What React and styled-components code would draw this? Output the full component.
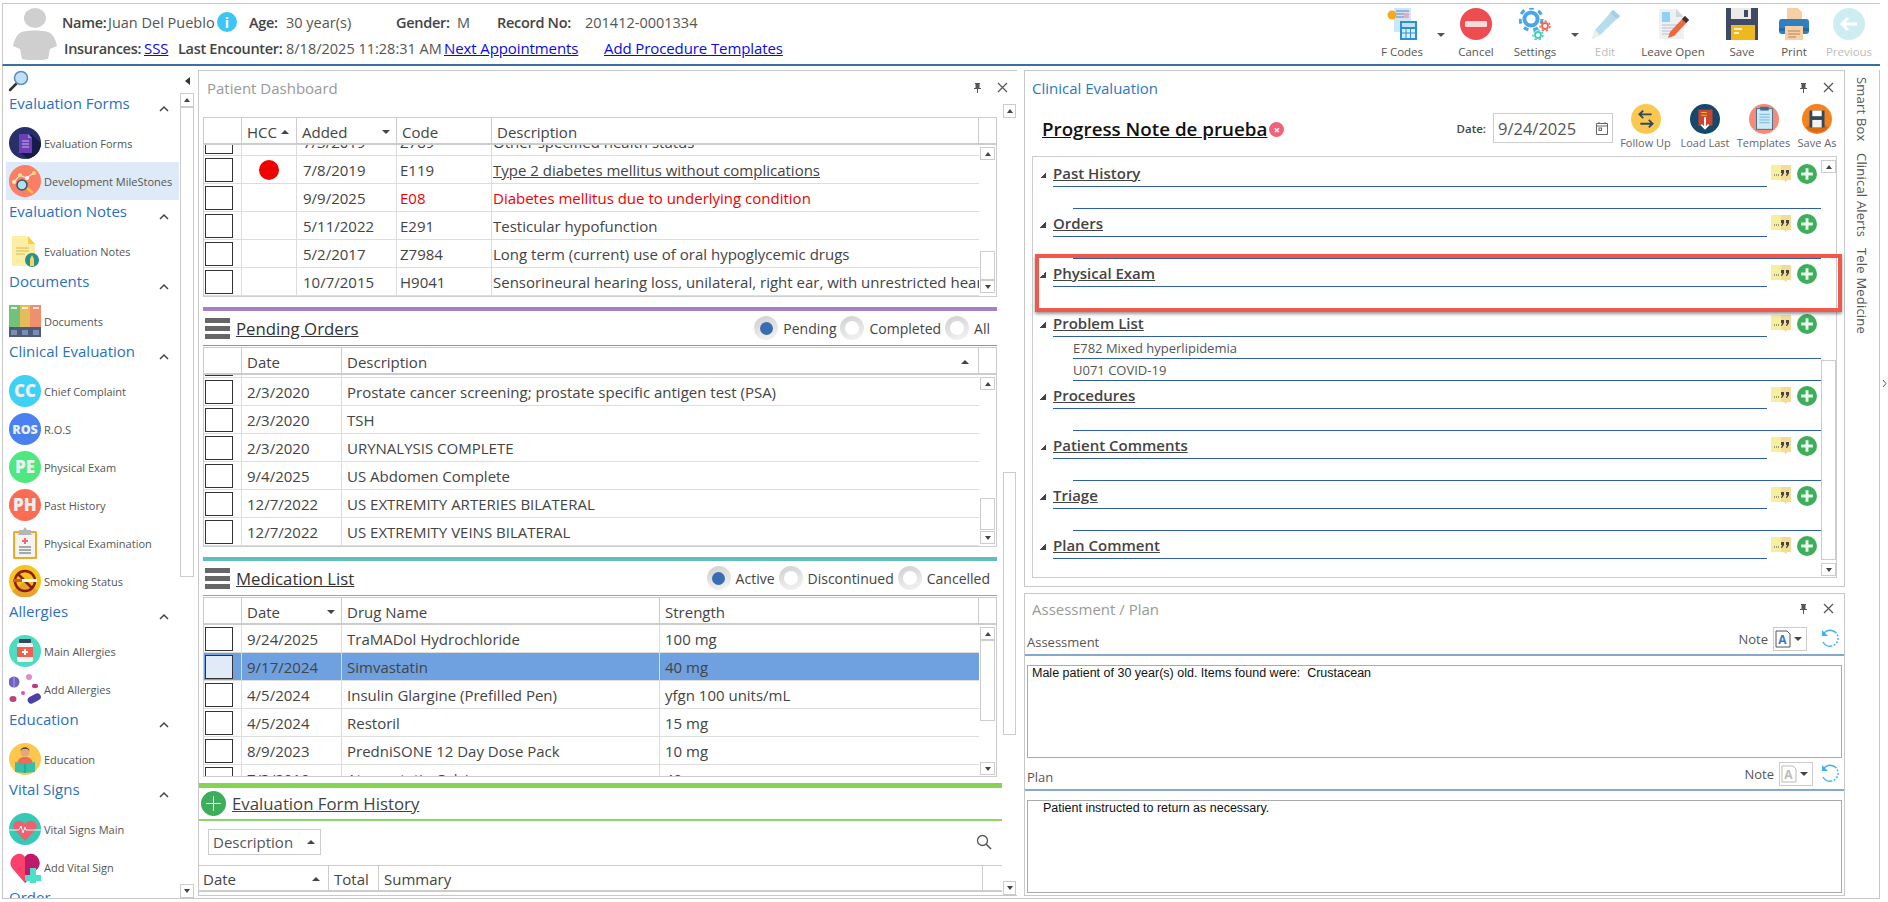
import React from "react";
import styled, { createGlobalStyle } from "styled-components";

const GlobalStyle = createGlobalStyle`
  html, body { margin: 0; padding: 0; background: #fff; }
  * { box-sizing: border-box; }
  body { font-family: "Open Sans", "Liberation Sans", sans-serif; color: #444; overflow: hidden; }
`;

const Frame = styled.div`
  width: 1888px;
  height: 902px;
  padding-top: 3px;
  display: flex;
  flex-direction: column;
  overflow: hidden;
  background: #fff;
`;

/* ---------- top header ---------- */
const Header = styled.header`
  width: 1878px;
  height: 63px;
  margin-left: 2px;
  border-top: 1px solid #c8c8c8;
  border-left: 1px solid #c8c8c8;
  border-bottom: 2px solid #3b6ea5;
  display: flex;
  justify-content: space-between;
`;

const PatientBox = styled.div`
  display: flex;
  padding-left: 9px;
`;

const Avatar = styled.svg`
  width: 46px;
  height: 52px;
  margin-top: 4px;
  margin-right: 4px;
`;

const InfoRows = styled.div`
  display: flex;
  flex-direction: column;
  padding-top: 5px;
`;

const InfoRow = styled.div`
  display: flex;
  align-items: center;
  height: 26px;
  padding-left: ${(p) => p.$indent || 0}px;
`;

const Slot = styled.div`
  width: ${(p) => p.$w}px;
  flex: none;
  white-space: nowrap;
  font-size: 14.500px;
  font-weight: ${(p) => (p.$bold ? 600 : 400)};
  letter-spacing: ${(p) => (p.$bold ? "-0.3px" : "0")};
  color: ${(p) => (p.$bold ? "#444" : "#555")};
`;

const HeadLink = styled.a`
  font-size: 15px;
  letter-spacing: -0.1px;
  color: #0a0ae6;
  text-decoration: underline;
`;

const InfoDot = styled.div`
  width: 20px;
  height: 20px;
  border-radius: 50%;
  background: #3cc5f5;
  color: #fff;
  font-size: 14px;
  font-weight: 700;
  display: flex;
  align-items: center;
  justify-content: center;
`;

const Toolbar = styled.div`
  display: flex;
  margin-right: 4px;
`;

const ToolItem = styled.div`
  width: ${(p) => p.$w}px;
  display: flex;
  flex-direction: column;
  align-items: center;
  padding-top: 4px;
  font-size: 11.500px;
  line-height: 15px;
  white-space: nowrap;
  color: ${(p) => (p.$off ? "#bbb" : "#555")};
  svg { display: block; margin-bottom: 4px; }
`;

const ToolCaret = styled.div`
  width: ${(p) => p.$w}px;
  display: flex;
  justify-content: center;
  padding-top: 29px;
  &::after {
    content: "";
    border-left: 4px solid transparent;
    border-right: 4px solid transparent;
    border-top: 4px solid #555;
    height: 0;
  }
`;

/* ---------- body ---------- */
const Body = styled.div`
  width: 1878px;
  height: 833px;
  margin-left: 2px;
  display: flex;
  border-bottom: 1px solid #c8c8c8;
  position: relative;
`;

const Sidebar = styled.aside`
  width: 196px;
  flex: none;
  border-left: 1px solid #c8c8c8;
  display: flex;
`;

const SideColumn = styled.div`
  width: 176px;
  display: flex;
  flex-direction: column;
  overflow: hidden;
`;

const SideSearch = styled.div`
  height: 26px;
  flex: none;
  padding: 4px 0 0 5px;
`;

const SideList = styled.div`
  flex: 1;
  overflow: hidden;
  padding-left: 3px;
`;

const GroupHead = styled.div`
  height: 32px;
  display: flex;
  justify-content: space-between;
  padding-left: 3px;
  padding-right: 10px;
`;

const GroupTitle = styled.div`
  font-size: 15px;
  line-height: 22px;
  color: #2a70c0;
  white-space: nowrap;
`;

const Chevron = styled.svg`
  width: 10px;
  height: 7px;
  margin-top: 13px;
`;

const SideItem = styled.div`
  height: 38px;
  display: flex;
  align-items: center;
  gap: 3px;
  padding-left: 3px;
  font-size: 11px;
  color: #555;
  white-space: nowrap;
  background: ${(p) => (p.$active ? "#deeaf7" : "transparent")};
`;

const SideRail = styled.div`
  width: 19px;
  padding-left: 1px;
  display: flex;
  flex-direction: column;
`;

const CollapseArrow = styled.div`
  height: 27px;
  flex: none;
  padding: 11px 0 0 5px;
  &::after {
    content: "";
    display: block;
    width: 0;
    border-top: 4px solid transparent;
    border-bottom: 4px solid transparent;
    border-right: 5px solid #333;
  }
`;

/* scrollbars */
const RailBox = styled.div`
  width: ${(p) => p.$w}px;
  flex: ${(p) => (p.$grow ? 1 : "none")};
  min-height: 0;
  display: flex;
  flex-direction: column;
  padding: ${(p) => p.$pad || "0"};
`;

const RailBtn = styled.div`
  height: ${(p) => p.$h || 13}px;
  flex: none;
  border: 1px solid #ccc;
  background: #fff;
  display: flex;
  align-items: center;
  justify-content: center;
  &::after {
    content: "";
    border-left: 3px solid transparent;
    border-right: 3px solid transparent;
    ${(p) => (p.$down ? "border-top: 4px solid #444;" : "border-bottom: 4px solid #444;")}
  }
`;

const Track = styled.div`
  flex: 1;
  overflow: hidden;
`;

const Thumb = styled.div`
  margin-top: ${(p) => p.$top}px;
  height: ${(p) => p.$h}px;
  border: 1px solid #ccc;
  background: #fff;
`;

const ScrollRail = ({ w, pad, top, h, btn, grow }) => (
  <RailBox $w={w} $pad={pad} $grow={grow}>
    <RailBtn $h={btn} />
    <Track>
      <Thumb $top={top} $h={h} />
    </Track>
    <RailBtn $h={btn} $down />
  </RailBox>
);

/* ---------- dashboard panel ---------- */
const DashPanel = styled.section`
  width: 819px;
  height: 826px;
  margin-top: 4px;
  flex: none;
  border-left: 1px solid #c8c8c8;
  border-top: 1px solid #c8c8c8;
  border-bottom: 1px solid #c8c8c8;
  display: flex;
  flex-direction: column;
`;

const PanelTitleRow = styled.div`
  height: ${(p) => p.$h || 33}px;
  flex: none;
  display: flex;
  align-items: center;
  justify-content: space-between;
  padding: 0 ${(p) => p.$right || 9}px ${(p) => p.$bottom || 0}px ${(p) => p.$left || 8}px;
`;

const PanelTitle = styled.div`
  font-size: 15px;
  color: ${(p) => (p.$active ? "#2a78c2" : "#999")};
`;

const PanelControls = styled.div`
  display: flex;
  align-items: center;
  gap: 15px;
`;

const DashRow = styled.div`
  flex: 1;
  display: flex;
  min-height: 0;
`;

const DashColumn = styled.div`
  width: 803px;
  flex: none;
  display: flex;
  flex-direction: column;
  padding-top: 13px;
`;

const DashRailWrap = styled.div`
  display: flex;
  margin-left: 1px;
`;

const GridSection = styled.div`
  padding: 0 5px 0 4px;
`;

const SectionHead = styled.div`
  margin-top: 10px;
  height: 39px;
  border-top: 4px solid ${(p) => p.$color};
  border-bottom: 1px solid ${(p) => p.$color};
  margin-bottom: 1px;
  display: flex;
  align-items: center;
  justify-content: space-between;
  padding-left: 2px;
`;

const HeadLeft = styled.div`
  display: flex;
  align-items: center;
  gap: 6px;
`;

const Hamburger = styled.div`
  width: 25px;
  height: 21px;
  background: repeating-linear-gradient(#666 0 5px, #fff 5px 8px);
`;

const SectionTitle = styled.div`
  font-size: 16.800px;
  color: #333;
  text-decoration: underline;
`;

const RadioRow = styled.div`
  display: flex;
  align-items: center;
  padding-right: 3px;
`;

const RadioOuter = styled.div`
  width: 24px;
  height: 24px;
  flex: none;
  border-radius: 50%;
  background: linear-gradient(160deg, #cfcfcf, #f5f5f5);
  display: flex;
  align-items: center;
  justify-content: center;
  margin-right: 5px;
  &::after {
    content: "";
    width: ${(p) => (p.$on ? 13 : 14)}px;
    height: ${(p) => (p.$on ? 13 : 14)}px;
    border-radius: 50%;
    background: ${(p) => (p.$on ? "#3a6cb0" : "#fff")};
  }
`;

const RadioLabel = styled.div`
  font-size: 14px;
  color: #444;
  margin-right: ${(p) => p.$mr || 4}px;
`;

const GridFrame = styled.div`
  height: ${(p) => p.$h}px;
  border: 1px solid #ccc;
  display: flex;
  flex-direction: column;
  overflow: hidden;
`;

const GridHead = styled.div`
  height: 27px;
  flex: none;
  display: grid;
  grid-template-columns: ${(p) => p.$cols};
  border-bottom: 2px solid #ccc;
`;

const HeadCell = styled.div`
  display: flex;
  align-items: center;
  justify-content: space-between;
  padding: 2px ${(p) => p.$right || 7}px 0 ${(p) => p.$pad ?? 5}px;
  font-size: 15px;
  color: #444;
  white-space: nowrap;
  border-right: 1px solid #ccc;
  &:last-child { border-right: none; }
`;

const SortMark = styled.span`
  width: 0;
  height: 0;
  border-left: 4px solid transparent;
  border-right: 4px solid transparent;
  ${(p) => (p.$down ? "border-top: 4px solid #444;" : "border-bottom: 4px solid #444;")}
`;

const GridBody = styled.div`
  flex: 1;
  display: flex;
  min-height: 0;
`;

const RowsClip = styled.div`
  flex: 1;
  min-width: 0;
  overflow: hidden;
`;

const RowsInner = styled.div`
  margin-top: -${(p) => p.$scroll || 0}px;
`;

const GridRow = styled.div`
  height: 28px;
  display: grid;
  grid-template-columns: ${(p) => p.$cols};
  border-bottom: 1px solid #ddd;
  background: ${(p) => (p.$selected ? "#6fa0e0" : "transparent")};
`;

const GridCell = styled.div`
  display: flex;
  align-items: center;
  padding-left: ${(p) => p.$pad ?? 5}px;
  font-size: 15px;
  white-space: nowrap;
  overflow: hidden;
  color: ${(p) => (p.$red ? "#f00000" : "#444")};
  text-decoration: ${(p) => (p.$link ? "underline" : "none")};
  border-right: 1px solid #ddd;
  &:last-child { border-right: none; }
`;

const CheckBox = styled.div`
  width: 28px;
  height: 24px;
  margin-left: 1px;
  flex: none;
  border: 1px solid #333;
  background: ${(p) => (p.$selected ? "#e0ebf7" : "#fff")};
`;

const RedDot = styled.div`
  width: 20px;
  height: 20px;
  margin-left: 17px;
  border-radius: 50%;
  background: #f00000;
`;

/* evaluation form history */
const GreenBar = styled.div`
  height: 5px;
  margin-top: 6px;
  flex: none;
  background: #85d44f;
`;

const HistoryHead = styled.div`
  height: 33px;
  flex: none;
  border-bottom: 2px solid #8fd468;
  display: flex;
  align-items: center;
  gap: 6px;
  padding-left: 2px;
`;

const HistoryTitle = styled(SectionTitle)`
  color: #444;
`;

const FilterRow = styled.div`
  height: 45px;
  flex: none;
  display: flex;
  align-items: center;
  justify-content: space-between;
  padding: 0 10px 2px 9px;
  border-bottom: 1px solid #ccc;
`;

const FilterSelect = styled.div`
  width: 113px;
  height: 26px;
  border: 1px solid #ccc;
  display: flex;
  align-items: center;
  justify-content: space-between;
  padding: 0 5px 0 4px;
  font-size: 15px;
  color: #555;
`;

const HistoryHeadRow = styled(GridHead)`
  height: 26px;
`;

/* ---------- right column ---------- */
const RightColumn = styled.div`
  width: 821px;
  flex: none;
  margin: 4px 0 0 7px;
  display: flex;
  flex-direction: column;
  gap: 6px;
`;

const ClinicalPanel = styled.section`
  height: 517px;
  flex: none;
  border: 1px solid #c8c8c8;
  display: flex;
  flex-direction: column;
`;

const NoteBar = styled.div`
  height: 52px;
  flex: none;
  display: flex;
  justify-content: space-between;
  padding: 0 1px 0 17px;
`;

const NoteTitleWrap = styled.div`
  display: flex;
  align-items: center;
  gap: 2px;
  height: 50px;
`;

const NoteTitle = styled.div`
  font-size: 18.800px;
  font-weight: 600;
  color: #111;
  text-decoration: underline;
`;

const NoteClose = styled.div`
  width: 15px;
  height: 15px;
  border-radius: 50%;
  background: #f0637a;
  color: #fff;
  font-size: 11px;
  font-weight: 700;
  line-height: 15px;
  text-align: center;
`;

const NoteTools = styled.div`
  display: flex;
  align-items: flex-start;
`;

const DateLabel = styled.div`
  font-size: 11.500px;
  font-weight: 600;
  color: #444;
  margin: 17px 7px 0 0;
`;

const DateField = styled.div`
  width: 120px;
  height: 30px;
  margin-top: 9px;
  margin-right: 4px;
  border: 1px solid #ccc;
  display: flex;
  align-items: center;
  justify-content: space-between;
  padding: 0 4px;
  font-size: 16.500px;
  color: #555;
`;

const NoteAction = styled.div`
  width: ${(p) => p.$w}px;
  display: flex;
  flex-direction: column;
  align-items: center;
  font-size: 11px;
  color: #666;
  white-space: nowrap;
  svg { display: block; margin-bottom: 1px; }
`;

const SectionBox = styled.div`
  flex: 1;
  margin: 0 7px 8px;
  border: 1px solid #ccc;
  display: flex;
  position: relative;
  min-height: 0;
`;

const SectionList = styled.div`
  flex: 1;
  min-width: 0;
  padding-top: 2px;
`;

const BodyLine = styled.div`
  height: ${(p) => p.$h}px;
  margin-left: 40px;
  border-bottom: 1px solid #2f5fa8;
  font-size: 13px;
  line-height: 22px;
  color: #555;
`;

const EvalHead = styled.div`
  height: 28px;
  display: flex;
`;

const Triangle = styled.div`
  width: 6px;
  height: 6px;
  margin: 13px 7px 0 7px;
  flex: none;
  background: linear-gradient(135deg, transparent 50%, #444 50%);
`;

const EvalTitleBox = styled.div`
  width: 714px;
  flex: none;
  border-bottom: 1px solid #2f5fa8;
  font-size: 15px;
  font-weight: 600;
  line-height: 26px;
  padding-top: 1px;
  color: #444;
  span { text-decoration: underline; }
`;

const EvalIcons = styled.div`
  display: flex;
  align-items: center;
  gap: 6px;
  padding-left: 4px;
  height: 26px;
  padding-top: 4px;
`;

const HighlightBox = styled.div`
  position: absolute;
  left: 2px;
  top: 97px;
  width: 807px;
  height: 58px;
  border: 4px solid #f0584c;
  box-shadow: 0 2px 3px rgba(0, 0, 0, 0.4);
  pointer-events: none;
`;

const AssessmentPanel = styled.section`
  height: 303px;
  flex: none;
  border: 1px solid #c8c8c8;
  display: flex;
  flex-direction: column;
`;

const NoteRow = styled.div`
  height: ${(p) => p.$h}px;
  flex: none;
  border-bottom: 2px solid #87a7cb;
  display: flex;
  align-items: flex-end;
  justify-content: space-between;
  padding: 0 4px 3px 2px;
`;

const NoteLabel = styled.div`
  font-size: 13px;
  color: #555;
`;

const NoteRight = styled.div`
  display: flex;
  align-items: center;
  font-size: 13px;
  color: #555;
`;

const NotePick = styled.div`
  width: 34px;
  height: 24px;
  margin-left: 5px;
  margin-right: ${(p) => p.$gap}px;
  border: 1px solid #ccc;
  display: flex;
  align-items: center;
  gap: 3px;
  padding-left: 1px;
  &::after {
    content: "";
    border-left: 4px solid transparent;
    border-right: 4px solid transparent;
    border-top: 4px solid #444;
  }
`;

const TextBox = styled.div`
  height: 93px;
  flex: none;
  margin: 9px 2px 0;
  border: 1px solid #aaa;
  padding: 0 ${(p) => p.$pad}px;
  font-family: "Liberation Sans", Arial, sans-serif;
  font-size: 12.500px;
  line-height: 14px;
  color: #111;
  white-space: pre;
`;

const SideTabs = styled.div`
  flex: 1;
  margin-top: 4px;
  border-right: 1px solid #c8c8c8;
  display: flex;
  flex-direction: column;
  align-items: center;
  gap: 11px;
  padding-top: 7px;
  position: relative;
`;

const SideTab = styled.div`
  writing-mode: vertical-rl;
  font-size: 13px;
  letter-spacing: 0.2px;
  color: #555;
  white-space: nowrap;
`;

const TinyMark = styled.svg`
  position: absolute;
  right: -8px;
  top: 309px;
  width: 5px;
  height: 9px;
`;

/* ---------- drawings ---------- */
const Ico = ({ size = 32, children }) => (
  <svg width={size} height={size} viewBox="0 0 32 32" style={{ flex: "none" }}>
    {children}
  </svg>
);

const PinIcon = () => (
  <svg width="9" height="12" viewBox="0 0 9 12">
    <path d="M2 1h5v1H6.500v4H8v1H5v4H4V7H1V6h1.500V2H2z" fill="#555" />
  </svg>
);

const CloseIcon = () => (
  <svg width="11" height="11" viewBox="0 0 11 11">
    <path d="M1 1l9 9M10 1l-9 9" stroke="#555" strokeWidth="1.200" />
  </svg>
);

const Magnifier = () => (
  <svg width="22" height="22" viewBox="0 0 22 22">
    <path d="M2 20l6-6" stroke="#333" strokeWidth="2.500" strokeLinecap="round" />
    <circle cx="13" cy="8" r="6.500" fill="#bfe0f5" stroke="#5a8fc0" strokeWidth="1.500" />
  </svg>
);

const GroupChevron = () => (
  <Chevron viewBox="0 0 10 7">
    <path d="M1 6l4-4 4 4" fill="none" stroke="#444" strokeWidth="1.500" />
  </Chevron>
);

const LetterIcon = ({ color, text, fs = 15 }) => (
  <Ico>
    <circle cx="16" cy="16" r="16" fill={color} />
    <text x="16" y={16 + fs * 0.36} textAnchor="middle" fontFamily="Open Sans" fontWeight="800" fontSize={fs} fill="#e8f0f0">
      {text}
    </text>
  </Ico>
);

const EvalFormsIcon = () => (
  <Ico>
    <circle cx="16" cy="16" r="16" fill="#27306b" />
    <path d="M10 25l12-18 10 9a16 16 0 0 1-13 15.700z" fill="#151c47" />
    <path d="M10 7h9l4 4v15H10z" fill="#6a3fb5" />
    <path d="M19 7l4 4h-4z" fill="#9d80d6" />
    <path d="M13 14h7M13 17h7M13 20h7" stroke="#c9b8ec" strokeWidth="1.200" />
  </Ico>
);

const MilestoneIcon = () => (
  <Ico>
    <circle cx="16" cy="16" r="16" fill="#fb7f65" />
    <path d="M5 17l6-7 6 3 8-5" fill="none" stroke="#fde2d8" strokeWidth="1.200" />
    <circle cx="5" cy="17" r="2" fill="#fff3b0" />
    <circle cx="11" cy="10" r="2" fill="#fbe07a" />
    <circle cx="18" cy="13" r="2" fill="#fff" />
    <circle cx="25" cy="8" r="2" fill="#fbe07a" />
    <path d="M18 23l6 5" stroke="#f5c33b" strokeWidth="2.500" />
    <circle cx="13" cy="20" r="5" fill="#aee0f0" stroke="#33536f" strokeWidth="1.500" />
  </Ico>
);

const NotesIcon = () => (
  <Ico>
    <path d="M3 1h16l7 8v22H3z" fill="#fdeea5" />
    <path d="M19 1l7 8h-7z" fill="#f9cf45" />
    <path d="M7 13h13M7 16h13M7 19h9" stroke="#d9b94a" strokeWidth="1.200" />
    <circle cx="23" cy="25" r="7" fill="#2a8f8a" />
    <path d="M21 24l2-4 2 4v7h-4z" fill="#f6d55c" />
  </Ico>
);

const DocumentsIcon = () => (
  <Ico>
    <rect x="0" y="0" width="11" height="32" fill="#71c37c" />
    <rect x="11" y="0" width="11" height="32" fill="#e6bb5b" />
    <rect x="21" y="0" width="11" height="32" fill="#ef8f6e" />
    <rect x="0" y="22" width="32" height="10" fill="#4f5b7a" />
    <path d="M2 3h6M13 3h6M24 3h6" stroke="#fff" strokeWidth="1.500" />
    <path d="M2 25h6v5H2zM13 25h6v5h-6zM24 25h6v5h-6z" fill="#7d8db0" />
  </Ico>
);

const ClipboardIcon = () => (
  <Ico>
    <rect x="4" y="4" width="24" height="28" rx="1.500" fill="#f5a623" />
    <rect x="6" y="6" width="20" height="24" fill="#f3f3ef" />
    <path d="M10 6V3h4l2-3 2 3h4v3l1 2H9z" fill="#b5b5b5" />
    <path d="M16 11v6M13 14h6" stroke="#ef6a7a" strokeWidth="2" />
    <path d="M10 20h12M10 23h12M10 26h12" stroke="#55606a" strokeWidth="1.200" />
  </Ico>
);

const SmokingIcon = () => (
  <Ico>
    <circle cx="16" cy="16" r="16" fill="#f9c31f" />
    <path d="M16 16l13 10a16 16 0 0 1-26 0z" fill="#e8a22e" />
    <circle cx="16" cy="16" r="10" fill="none" stroke="#8c1d12" strokeWidth="2.500" />
    <path d="M9 9l14 14" stroke="#8c1d12" strokeWidth="2.500" />
    <rect x="4" y="14" width="9" height="3" fill="#e5522d" />
    <rect x="13" y="14" width="15" height="3" fill="#fff" />
  </Ico>
);

const BottleIcon = () => (
  <Ico>
    <circle cx="16" cy="16" r="16" fill="#4edcc0" />
    <rect x="10" y="4" width="12" height="4" rx="1" fill="#33485c" />
    <rect x="8" y="8" width="16" height="19" rx="2" fill="#f4f4f4" />
    <rect x="8" y="12" width="16" height="10" fill="#f0624f" />
    <path d="M16 14v6M13 17h6" stroke="#fff" strokeWidth="2" />
  </Ico>
);

const PillsIcon = () => (
  <Ico>
    <circle cx="5" cy="9" r="5.500" fill="#6c63c7" />
    <path d="M5 3.500v11" stroke="#a9a3ea" />
    <circle cx="20" cy="4" r="3" fill="#e58bc0" />
    <ellipse cx="26" cy="13" rx="3" ry="2.200" fill="#b93a82" />
    <circle cx="14" cy="20" r="2" fill="#e84ea5" />
    <ellipse cx="4" cy="26" rx="3.500" ry="3" fill="#b4457e" />
    <rect x="18" y="22" width="14" height="7" rx="3.500" fill="#4c3fa8" transform="rotate(-28 25 25)" />
  </Ico>
);

const EducationIcon = () => (
  <Ico>
    <circle cx="16" cy="16" r="16" fill="#fbc84d" />
    <circle cx="16" cy="9" r="4.500" fill="#e9a57c" />
    <path d="M11.500 8c0-5 9-5 9 0l-2-2h-5z" fill="#5b4a42" />
    <path d="M8 22c0-6 4-8 8-8s8 2 8 8z" fill="#ef6a5b" />
    <path d="M6 19l10 2 10-2v10l-10 1-10-1z" fill="#34bfa8" />
    <path d="M16 21v9" stroke="#1f9684" />
  </Ico>
);

const VitalIcon = () => (
  <Ico>
    <circle cx="16" cy="16" r="16" fill="#36c9b5" />
    <path d="M16 28L5 16c-4-6 6-12 11-5 5-7 15-1 11 5z" fill="#f0606e" />
    <path d="M0 17h10l2-4 2 7 2-6 1 3h15" fill="none" stroke="#e6fbf8" strokeWidth="1" />
  </Ico>
);

const AddVitalIcon = () => (
  <Ico>
    <path d="M16 32L3 17C-3 8 10-3 16 6c6-9 19 2 13 11z" fill="#f9416b" />
    <path d="M16 32V6c6-9 19 2 13 11z" fill="#c0186a" />
    <path d="M16 24h5v-7h6v7h5v6h-5v2h-6v-2h-5z" fill="#4be0c8" />
  </Ico>
);

const PlusCircle = ({ size = 25, line }) => (
  <svg width={size} height={size} viewBox="0 0 24 24" style={{ flex: "none" }}>
    <circle cx="12" cy="12" r="12" fill="#3fae5b" />
    <path d="M12 5v14M5 12h14" stroke={line ? "#fff" : "#e8f8ec"} strokeWidth={line ? 1 : 3.500} />
  </svg>
);

const QuoteIcon = () => (
  <svg width="20" height="20" viewBox="0 0 20 20" style={{ flex: "none" }}>
    <path d="M0 1h20v15h-4l-1 2-2-2H0z" fill="#f6efa0" />
    <path d="M10 1h10v15h-4l-1 2-2-2h-3z" fill="#f5dc96" />
    <path d="M10 6h3v3l-2 3h-1l1-3h-1zM15 6h3v3l-2 3h-1l1-3h-1z" fill="#444" />
    <path d="M3 11h1M5 11h1M7 11h1" stroke="#444" />
  </svg>
);

const FCodesIcon = () => (
  <Ico>
    <rect x="8" y="0" width="17" height="24" fill="#cfe6f7" />
    <path d="M10 3h13M10 6h8M10 9h8" stroke="#5f7fbf" />
    <rect x="18" y="5" width="5" height="5" fill="#f4a6c0" />
    <circle cx="6" cy="7" r="4.500" fill="#f6a821" />
    <rect x="14" y="13" width="17" height="19" fill="#2e8fd0" />
    <rect x="16" y="15" width="13" height="4" fill="#bfe3f6" />
    <path d="M16 21h13v9H16z" fill="#d6eefa" />
    <path d="M20 21v9M24.500 21v9M16 25h13" stroke="#2e8fd0" />
  </Ico>
);

const CancelIcon = () => (
  <Ico>
    <circle cx="16" cy="16" r="16" fill="#ee4c50" />
    <rect x="5" y="13" width="22" height="6" rx="1" fill="#f6d9d9" />
  </Ico>
);

const GearPath = ({ cx, cy, r, color, hole }) => (
  <g>
    <circle cx={cx} cy={cy} r={r} fill="none" stroke={color} strokeWidth={r * 0.28} strokeDasharray={`${r * 0.45} ${r * 0.45}`} />
    <circle cx={cx} cy={cy} r={r * 0.78} fill={color} />
    <circle cx={cx} cy={cy} r={r * 0.42} fill={hole} />
  </g>
);

const SettingsIcon = () => (
  <Ico>
    <GearPath cx={12} cy={11} r={11} color="#49a6ec" hole="#fff" />
    <GearPath cx={26} cy={18} r={5} color="#f0654f" hole="#fff" />
    <GearPath cx={19} cy={27} r={5} color="#3ed0b4" hole="#fff" />
  </Ico>
);

const EditIcon = () => (
  <Ico>
    <path d="M24 2l7 6L11 27 3 31l3-9z" fill="#b6dcee" />
    <path d="M6 22l5 5-8 4z" fill="#eee" />
    <path d="M24 2l7 6-3 3-7-6z" fill="#a4cfe4" />
  </Ico>
);

const LeaveOpenIcon = () => (
  <Ico>
    <path d="M2 1h17l8 8v22H2z" fill="#eef1f4" />
    <path d="M19 1l8 8h-8z" fill="#d3d8dd" />
    <rect x="5" y="4" width="8" height="10" fill="#8fd2f5" />
    <path d="M5 17h15M5 20h12M5 23h10M5 26h8" stroke="#b8c0c8" />
    <path d="M28 8l4 4-15 16-6 2 2-6z" fill="#f0673c" />
    <path d="M28 8l4 4-3 3-4-4z" fill="#333" />
  </Ico>
);

const SaveIcon = () => (
  <Ico>
    <path d="M0 0h32v32H0z" fill="#3f4a66" />
    <path d="M5 0h20v11H5z" fill="#ecebe6" />
    <rect x="18" y="2" width="4" height="7" fill="#3f4a66" />
    <rect x="5" y="17" width="24" height="15" fill="#eeb91f" />
    <path d="M8 21h8M8 25h5" stroke="#fff" strokeWidth="1.500" />
  </Ico>
);

const PrintIcon = () => (
  <Ico>
    <path d="M9 0h11l4 4v8H9z" fill="#f6cfa5" />
    <rect x="1" y="11" width="30" height="15" rx="3" fill="#2f7fc1" />
    <rect x="1" y="20" width="30" height="3" fill="#2768a0" />
    <rect x="7" y="18" width="18" height="14" fill="#f6cfa5" />
    <path d="M10 23h12M10 26h12M10 29h8" stroke="#b5835a" />
  </Ico>
);

const PreviousIcon = () => (
  <Ico>
    <circle cx="16" cy="16" r="16" fill="#cdedf2" />
    <path d="M24 16H10M15 10l-6 6 6 6" fill="none" stroke="#fff" strokeWidth="3" />
  </Ico>
);

const FollowUpIcon = () => (
  <Ico size={30}>
    <circle cx="16" cy="16" r="16" fill="#fbc74f" />
    <path d="M22 11H9M13 7l-4 4 4 4" fill="none" stroke="#33485c" strokeWidth="2" />
    <path d="M10 21h13M19 17l4 4-4 4" fill="none" stroke="#33485c" strokeWidth="2" />
  </Ico>
);

const LoadLastIcon = () => (
  <Ico size={30}>
    <circle cx="16" cy="16" r="16" fill="#15486b" />
    <rect x="9" y="6" width="15" height="17" fill="#c8452f" />
    <path d="M12 9h6M12 12h6" stroke="#f5c33b" />
    <path d="M16 14v12M12 22l4 4 4-4" fill="none" stroke="#fff" strokeWidth="2" />
  </Ico>
);

const TemplatesIcon = () => (
  <Ico size={30}>
    <circle cx="16" cy="16" r="16" fill="#f58a76" />
    <rect x="8" y="5" width="17" height="22" fill="#cfeaf7" stroke="#3f6d8f" />
    <rect x="12" y="3" width="9" height="4" fill="#3f6d8f" />
    <path d="M11 11h11M11 14h11M11 17h11M11 20h11" stroke="#6fb5dc" />
  </Ico>
);

const SaveAsIcon = () => (
  <Ico size={30}>
    <circle cx="16" cy="16" r="16" fill="#f58220" />
    <path d="M16 16l12 9a16 16 0 0 1-24 0z" fill="#d96a15" />
    <rect x="8" y="7" width="16" height="18" fill="#33485c" />
    <rect x="11" y="7" width="10" height="6" fill="#fff" />
    <rect x="11" y="17" width="10" height="8" fill="#f2f2f2" />
  </Ico>
);

const CalendarIcon = () => (
  <svg width="12" height="13" viewBox="0 0 12 13">
    <path d="M.5 1.500h11v11H.5zM.5 4h11" fill="none" stroke="#666" />
    <rect x="3" y="6" width="2.500" height="2.500" fill="none" stroke="#666" />
    <path d="M3 0v2M9 0v2" stroke="#666" />
  </svg>
);

const RefreshIcon = () => (
  <svg width="20" height="20" viewBox="0 0 20 20" style={{ flex: "none" }}>
    <path d="M4 4a8 8 0 1 1-1 9" fill="none" stroke="#3bb4ee" strokeWidth="1.500" strokeDasharray="12 0 2 1.500 2 1.500 2 1.500 2 1.500 2 1.500" />
    <path d="M2 1v6h6z" fill="#3bb4ee" />
  </svg>
);

const NoteDocIcon = ({ off }) => (
  <svg width="16" height="18" viewBox="0 0 16 18">
    <path d="M1 1h11l3 3v13H1z" fill="#fff" stroke={off ? "#bbb" : "#555"} />
    <text x="7.500" y="14" textAnchor="middle" fontFamily="Open Sans" fontWeight="700" fontSize="12" fill={off ? "#bbb" : "#3a76c8"}>A</text>
  </svg>
);

const SearchGlyph = () => (
  <svg width="16" height="16" viewBox="0 0 16 16">
    <circle cx="6.500" cy="6.500" r="5" fill="none" stroke="#555" strokeWidth="1.300" />
    <path d="M10 10l5 5" stroke="#555" strokeWidth="1.600" />
  </svg>
);

/* ---------- data ---------- */
const sideGroups = [
  { title: "Evaluation Forms", items: [["Evaluation Forms", <EvalFormsIcon />], ["Development MileStones", <MilestoneIcon />, true]] },
  { title: "Evaluation Notes", items: [["Evaluation Notes", <NotesIcon />]] },
  { title: "Documents", items: [["Documents", <DocumentsIcon />]] },
  {
    title: "Clinical Evaluation",
    items: [
      ["Chief Complaint", <LetterIcon color="#3fd0f5" text="CC" fs={17} />],
      ["R.O.S", <LetterIcon color="#4a80f0" text="ROS" fs={12.500} />],
      ["Physical Exam", <LetterIcon color="#4fe880" text="PE" fs={17} />],
      ["Past History", <LetterIcon color="#fb6c54" text="PH" fs={17} />],
      ["Physical Examination", <ClipboardIcon />],
      ["Smoking Status", <SmokingIcon />],
    ],
  },
  { title: "Allergies", items: [["Main Allergies", <BottleIcon />], ["Add Allergies", <PillsIcon />]] },
  { title: "Education", items: [["Education", <EducationIcon />]] },
  { title: "Vital Signs", items: [["Vital Signs Main", <VitalIcon />], ["Add Vital Sign", <AddVitalIcon />]] },
  { title: "Order", items: [] },
];

const problemCols = "38px 55px 100px 95px 1fr";
const problemRows = [
  ["7/3/2019", "Z789", "Other specified health status"],
  ["7/8/2019", "E119", "Type 2 diabetes mellitus without complications", "hcc"],
  ["9/9/2025", "E08", "Diabetes mellitus due to underlying condition", "red"],
  ["5/11/2022", "E291", "Testicular hypofunction"],
  ["5/2/2017", "Z7984", "Long term (current) use of oral hypoglycemic drugs"],
  ["10/7/2015", "H9041", "Sensorineural hearing loss, unilateral, right ear, with unrestricted hearing"],
];

const orderCols = "38px 100px 1fr";
const orderRows = [
  ["", ""],
  ["2/3/2020", "Prostate cancer screening; prostate specific antigen test (PSA)"],
  ["2/3/2020", "TSH"],
  ["2/3/2020", "URYNALYSIS COMPLETE"],
  ["9/4/2025", "US Abdomen Complete"],
  ["12/7/2022", "US EXTREMITY ARTERIES BILATERAL"],
  ["12/7/2022", "US EXTREMITY VEINS BILATERAL"],
];

const medCols = "38px 100px 318px 1fr";
const medRows = [
  ["9/24/2025", "TraMADol Hydrochloride", "100 mg"],
  ["9/17/2024", "Simvastatin", "40 mg", true],
  ["4/5/2024", "Insulin Glargine (Prefilled Pen)", "yfgn 100 units/mL"],
  ["4/5/2024", "Restoril", "15 mg"],
  ["8/9/2023", "PredniSONE 12 Day Dose Pack", "10 mg"],
  ["7/3/2019", "Atorvastatin Calcium", "40 mg"],
];

const evalSections = [
  { title: "Past History" },
  { title: "Orders" },
  { title: "Physical Exam" },
  { title: "Problem List", lines: ["E782 Mixed hyperlipidemia", "U071 COVID-19"] },
  { title: "Procedures" },
  { title: "Patient Comments" },
  { title: "Triage" },
  { title: "Plan Comment", last: true },
];

const RadioGroup = ({ options }) => (
  <RadioRow>
    {options.map((o, i) => (
      <React.Fragment key={o}>
        <RadioOuter $on={i === 0} />
        <RadioLabel $mr={i === options.length - 1 ? 0 : 4}>{o}</RadioLabel>
      </React.Fragment>
    ))}
  </RadioRow>
);

export default function App() {
  return (
    <Frame>
      <GlobalStyle />
      <Header>
        <PatientBox>
          <Avatar viewBox="0 0 46 52">
            <ellipse cx="23" cy="10" rx="11" ry="10" fill="#cfcfcf" />
            <path d="M10 24c5-2 21-2 26 0 5 1 8 9 9 14l-7 3-2 10c-8 2-18 2-26 0L8 41l-7-3c1-5 4-13 9-14z" fill="#cfcfcf" />
          </Avatar>
          <InfoRows>
            <InfoRow>
              <Slot $w={46} $bold>Name:</Slot>
              <Slot $w={109}>Juan Del Pueblo</Slot>
              <Slot $w={32}><InfoDot>i</InfoDot></Slot>
              <Slot $w={37} $bold>Age:</Slot>
              <Slot $w={110}>30 year(s)</Slot>
              <Slot $w={61} $bold>Gender:</Slot>
              <Slot $w={40}>M</Slot>
              <Slot $w={88} $bold>Record No:</Slot>
              <Slot $w={120}>201412-0001334</Slot>
            </InfoRow>
            <InfoRow $indent={2}>
              <Slot $w={80} $bold>Insurances:</Slot>
              <Slot $w={34}><HeadLink>SSS</HeadLink></Slot>
              <Slot $w={108} $bold>Last Encounter:</Slot>
              <Slot $w={158}>8/18/2025 11:28:31 AM</Slot>
              <Slot $w={160}><HeadLink>Next Appointments</HeadLink></Slot>
              <Slot $w={190}><HeadLink>Add Procedure Templates</HeadLink></Slot>
            </InfoRow>
          </InfoRows>
        </PatientBox>
        <Toolbar>
          <ToolItem $w={60}><FCodesIcon />F Codes</ToolItem>
          <ToolCaret $w={18} />
          <ToolItem $w={52}><CancelIcon />Cancel</ToolItem>
          <ToolItem $w={66}><SettingsIcon />Settings</ToolItem>
          <ToolCaret $w={14} />
          <ToolItem $w={46} $off><EditIcon />Edit</ToolItem>
          <ToolItem $w={90}><LeaveOpenIcon />Leave Open</ToolItem>
          <ToolItem $w={48}><SaveIcon />Save</ToolItem>
          <ToolItem $w={56}><PrintIcon />Print</ToolItem>
          <ToolItem $w={54} $off><PreviousIcon />Previous</ToolItem>
        </Toolbar>
      </Header>

      <Body>
        <Sidebar>
          <SideColumn>
            <SideSearch><Magnifier /></SideSearch>
            <SideList>
              {sideGroups.map((g) => (
                <div key={g.title}>
                  <GroupHead>
                    <GroupTitle>{g.title}</GroupTitle>
                    {g.items.length > 0 && <GroupChevron />}
                  </GroupHead>
                  {g.items.map(([label, icon, active]) => (
                    <SideItem key={label} $active={active}>
                      {icon}
                      {label}
                    </SideItem>
                  ))}
                </div>
              ))}
            </SideList>
          </SideColumn>
          <SideRail>
            <CollapseArrow />
            <ScrollRail w={14} btn={14} top={0} h={470} grow />
          </SideRail>
        </Sidebar>

        <DashPanel>
          <PanelTitleRow>
            <PanelTitle>Patient Dashboard</PanelTitle>
            <PanelControls><PinIcon /><CloseIcon /></PanelControls>
          </PanelTitleRow>
          <DashRow>
            <DashColumn>
              <GridSection>
                <GridFrame $h={180}>
                  <GridHead $cols={problemCols + " 17px"}>
                    <HeadCell />
                    <HeadCell $right={7}>HCC<SortMark /></HeadCell>
                    <HeadCell $right={6}>Added<SortMark $down /></HeadCell>
                    <HeadCell>Code</HeadCell>
                    <HeadCell>Description</HeadCell>
                    <HeadCell />
                  </GridHead>
                  <GridBody>
                    <RowsClip>
                      <RowsInner $scroll={17}>
                        {problemRows.map(([date, code, desc, flag]) => (
                          <GridRow key={code} $cols={problemCols}>
                            <GridCell $pad={0}><CheckBox /></GridCell>
                            <GridCell $pad={0}>{flag === "hcc" && <RedDot />}</GridCell>
                            <GridCell $pad={6}>{date}</GridCell>
                            <GridCell $pad={3} $red={flag === "red"}>{code}</GridCell>
                            <GridCell $pad={1} $red={flag === "red"} $link={flag === "hcc"}>{desc}</GridCell>
                          </GridRow>
                        ))}
                      </RowsInner>
                    </RowsClip>
                    <ScrollRail w={17} pad="2px 1px 3px" top={91} h={29} />
                  </GridBody>
                </GridFrame>

                <SectionHead $color="#a77fc4">
                  <HeadLeft><Hamburger /><SectionTitle>Pending Orders</SectionTitle></HeadLeft>
                  <RadioGroup options={["Pending", "Completed", "All"]} />
                </SectionHead>
                <GridFrame $h={200}>
                  <GridHead $cols={orderCols + " 17px"}>
                    <HeadCell />
                    <HeadCell>Date</HeadCell>
                    <HeadCell $right={9}>Description<SortMark /></HeadCell>
                    <HeadCell />
                  </GridHead>
                  <GridBody>
                    <RowsClip>
                      <RowsInner $scroll={25}>
                        {orderRows.map(([date, desc], i) => (
                          <GridRow key={i} $cols={orderCols}>
                            <GridCell $pad={0}><CheckBox /></GridCell>
                            <GridCell>{date}</GridCell>
                            <GridCell>{desc}</GridCell>
                          </GridRow>
                        ))}
                      </RowsInner>
                    </RowsClip>
                    <ScrollRail w={17} pad="2px 1px" top={108} h={32} />
                  </GridBody>
                </GridFrame>

                <SectionHead $color="#5fbdbd">
                  <HeadLeft><Hamburger /><SectionTitle>Medication List</SectionTitle></HeadLeft>
                  <RadioGroup options={["Active", "Discontinued", "Cancelled"]} />
                </SectionHead>
                <GridFrame $h={180}>
                  <GridHead $cols={medCols + " 17px"}>
                    <HeadCell />
                    <HeadCell $right={6}>Date<SortMark $down /></HeadCell>
                    <HeadCell>Drug Name</HeadCell>
                    <HeadCell>Strength</HeadCell>
                    <HeadCell />
                  </GridHead>
                  <GridBody>
                    <RowsClip>
                      {medRows.map(([date, drug, strength, selected]) => (
                        <GridRow key={drug} $cols={medCols} $selected={selected}>
                          <GridCell $pad={0}><CheckBox $selected={selected} /></GridCell>
                          <GridCell>{date}</GridCell>
                          <GridCell>{drug}</GridCell>
                          <GridCell>{strength}</GridCell>
                        </GridRow>
                      ))}
                    </RowsClip>
                    <ScrollRail w={17} pad="2px 1px 1px" top={0} h={81} />
                  </GridBody>
                </GridFrame>
              </GridSection>

              <GreenBar />
              <HistoryHead>
                <PlusCircle line />
                <HistoryTitle>Evaluation Form History</HistoryTitle>
              </HistoryHead>
              <FilterRow>
                <FilterSelect>Description<SortMark /></FilterSelect>
                <SearchGlyph />
              </FilterRow>
              <HistoryHeadRow $cols="130px 50px 604px 1fr">
                <HeadCell $pad={4} $right={8}>Date<SortMark /></HeadCell>
                <HeadCell>Total</HeadCell>
                <HeadCell>Summary</HeadCell>
                <HeadCell />
              </HistoryHeadRow>
            </DashColumn>
            <DashRailWrap>
              <ScrollRail w={13} btn={14} top={354} h={263} />
            </DashRailWrap>
          </DashRow>
        </DashPanel>

        <RightColumn>
          <ClinicalPanel>
            <PanelTitleRow $left={7} $right={10}>
              <PanelTitle $active>Clinical Evaluation</PanelTitle>
              <PanelControls><PinIcon /><CloseIcon /></PanelControls>
            </PanelTitleRow>
            <NoteBar>
              <NoteTitleWrap>
                <NoteTitle>Progress Note de prueba</NoteTitle>
                <NoteClose>×</NoteClose>
              </NoteTitleWrap>
              <NoteTools>
                <DateLabel>Date:</DateLabel>
                <DateField>9/24/2025<CalendarIcon /></DateField>
                <NoteAction $w={57}><FollowUpIcon />Follow Up</NoteAction>
                <NoteAction $w={62}><LoadLastIcon />Load Last</NoteAction>
                <NoteAction $w={55}><TemplatesIcon />Templates</NoteAction>
                <NoteAction $w={52}><SaveAsIcon />Save As</NoteAction>
              </NoteTools>
            </NoteBar>
            <SectionBox>
              <SectionList>
                {evalSections.map((s) => (
                  <div key={s.title}>
                    <EvalHead>
                      <Triangle />
                      <EvalTitleBox><span>{s.title}</span></EvalTitleBox>
                      <EvalIcons><QuoteIcon /><PlusCircle size={20} /></EvalIcons>
                    </EvalHead>
                    {s.lines
                      ? s.lines.map((l) => <BodyLine key={l} $h={22}>{l}</BodyLine>)
                      : !s.last && <BodyLine $h={22} />}
                  </div>
                ))}
              </SectionList>
              <ScrollRail w={15} pad="3px 0 1px" top={187} h={200} />
              <HighlightBox />
            </SectionBox>
          </ClinicalPanel>

          <AssessmentPanel>
            <PanelTitleRow $h={31} $bottom={2} $left={7} $right={10}>
              <PanelTitle>Assessment / Plan</PanelTitle>
              <PanelControls><PinIcon /><CloseIcon /></PanelControls>
            </PanelTitleRow>
            <NoteRow $h={31}>
              <NoteLabel>Assessment</NoteLabel>
              <NoteRight>
                <span>Note</span>
                <NotePick $gap={13}><NoteDocIcon /></NotePick>
                <RefreshIcon />
              </NoteRight>
            </NoteRow>
            <TextBox $pad={4}>Male patient of 30 year(s) old. Items found were:  Crustacean</TextBox>
            <NoteRow $h={33}>
              <NoteLabel>Plan</NoteLabel>
              <NoteRight>
                <span>Note</span>
                <NotePick $gap={7}><NoteDocIcon off /></NotePick>
                <RefreshIcon />
              </NoteRight>
            </NoteRow>
            <TextBox $pad={15}>Patient instructed to return as necessary.</TextBox>
          </AssessmentPanel>
        </RightColumn>

        <SideTabs>
          <SideTab>Smart Box</SideTab>
          <SideTab>Clinical Alerts</SideTab>
          <SideTab>Tele Medicine</SideTab>
          <TinyMark viewBox="0 0 5 9"><path d="M1 1l3 3.500-3 3.500" fill="none" stroke="#555" /></TinyMark>
        </SideTabs>
      </Body>
    </Frame>
  );
}
